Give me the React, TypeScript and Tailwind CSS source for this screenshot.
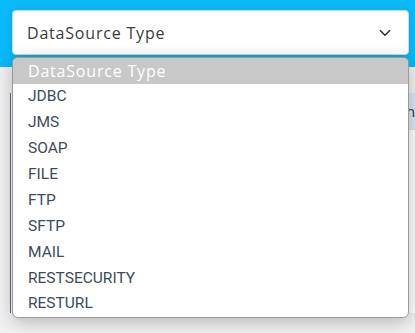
import { ChevronDown } from "lucide-react";

const options = ["JDBC", "JMS", "SOAP", "FILE", "FTP", "SFTP", "MAIL", "RESTSECURITY", "RESTURL"];

export default function App() {
  return (
    <div className="relative w-[415px] h-[333px] overflow-hidden bg-[#f2f2f2] font-['Open_Sans','Noto_Sans',sans-serif]">
      {/* header band */}
      <div className="h-[67px] bg-[#09b9f8]" />

      {/* content behind the dropdown */}
      <div className="ml-[10px] mt-[26px] h-[220px] border-l border-[#5a6a8a] bg-white flex justify-end">
        <div className="w-[9px] h-[37px] bg-[#dbe7f3] text-[#4a2a2a] text-[15px] leading-[37px] overflow-hidden">n</div>
      </div>

      {/* select */}
      <div className="absolute left-[12px] top-[10px] w-[397px] h-[45px] rounded-[4px] border border-[#d6d6d6] bg-white shadow-[0_2px_6px_rgba(0,0,0,0.12)] flex items-center justify-between pl-[14px] pr-[14px]">
        <span className="text-[16px] text-[#3b3b3b] tracking-[0.8px]">DataSource Type</span>
        <ChevronDown className="w-[18px] h-[18px] text-[#333]" strokeWidth={2.2} />
      </div>

      {/* dropdown list */}
      <div className="absolute left-[12px] top-[57px] w-[397px] h-[261px] rounded-[6px] border border-[#9a9a9a] bg-white overflow-hidden shadow-[0_4px_18px_rgba(0,0,0,0.25)]">
        <div className="h-[26px] bg-[#c8c8c8] pl-[15px] flex items-center text-[16px] text-white tracking-[0.8px]">DataSource Type</div>
        {options.map((o) => (
          <div key={o} className="h-[25.9px] pl-[15px] flex items-center text-[15.5px] text-[#3d4b5c] font-['Roboto',sans-serif]">
            {o}
          </div>
        ))}
      </div>
    </div>
  );
}
